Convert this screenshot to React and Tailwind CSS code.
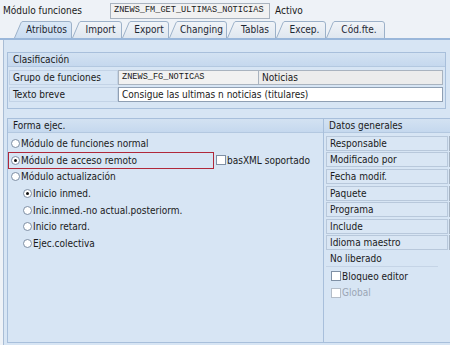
import React from "react";

const tabs = [
  ["Atributos", 58, true],
  ["Import", 50],
  ["Export", 47],
  ["Changing", 58],
  ["Tablas", 49],
  ["Excep.", 50],
  ["Cód.fte.", 59],
];

function Tab({ label, w, active }) {
  const d = `M0.5 17 L7 1.8 Q7.6 0.5 9 0.5 L${w - 3} 0.5 Q${w - 0.5} 0.5 ${w - 0.5} 3 L${w - 0.5} 17`;
  return (
    <div className="relative h-[17px] shrink-0" style={{ width: w }}>
      <svg className="absolute inset-0" width={w} height={17}>
        <defs>
          <linearGradient id={"g" + label} x1="0" y1="0" x2="0" y2="1">
            <stop offset="0" stopColor={active ? "#dce9f7" : "#f1f4f8"} />
            <stop offset="1" stopColor={active ? "#c9dcf1" : "#dfe7f0"} />
          </linearGradient>
        </defs>
        <path d={d} fill={`url(#g${label})`} stroke="#9cb1c9" strokeWidth="1" />
      </svg>
      <span className="relative flex h-full items-center justify-center pl-[7px] text-[10px] text-[#1d2733]">
        {label}
      </span>
    </div>
  );
}

function Radio({ on }) {
  return (
    <span className="flex h-[9px] w-[9px] shrink-0 items-center justify-center rounded-full border border-[#7d8ea4] bg-white">
      {on && <span className="h-[3px] w-[3px] rounded-full bg-[#111]" />}
    </span>
  );
}

function Check({ disabled }) {
  return (
    <span
      className={
        "h-[10px] w-[10px] shrink-0 border bg-white " +
        (disabled ? "border-[#b4bdc8] bg-[#eef1f4]" : "border-[#7f90a5]")
      }
    />
  );
}

function RadioRow({ on, label, indent }) {
  return (
    <div className={"flex h-[16.6px] items-center gap-[1px] " + (indent ? "pl-[15px]" : "pl-[3px]")}>
      <Radio on={on} />
      <span>{label}</span>
    </div>
  );
}

function InfoRow({ label }) {
  return (
    <div className="flex h-[16.6px] items-center pl-[2px]">
      <div className="flex h-[15px] w-[122px] shrink-0 items-center border border-[#b8c8db] bg-[#d9e6f4] pl-[3px]">
        {label}
      </div>
      <div className="ml-[1px] h-[15px] w-[20px] shrink-0 border border-[#a4b1c0] bg-[#f2f2f2]" />
    </div>
  );
}

export default function App() {
  return (
    <div className="flex h-[345px] w-[450px] flex-col overflow-hidden bg-[#eef2f7] font-['DejaVu_Sans_Condensed','Liberation_Sans',sans-serif] text-[10px] text-[#1a1a1a]">
      <div className="flex h-[21px] shrink-0 items-center pl-[3px]">
        <span className="w-[107px] shrink-0">Módulo funciones</span>
        <div className="flex h-[16px] w-[160px] shrink-0 items-center border border-[#a9b3bf] bg-[#f1f1f1] pl-[3px] font-['Liberation_Mono',monospace] text-[8.6px]">
          ZNEWS_FM_GET_ULTIMAS_NOTICIAS
        </div>
        <span className="ml-[5px]">Activo</span>
      </div>

      <div className="flex h-[17px] shrink-0 items-end pl-[14px]">
        {tabs.map(([l, w, a]) => (
          <Tab key={l} label={l} w={w} active={a} />
        ))}
      </div>
      <div className="h-[2px] shrink-0 bg-[#9ab7da]" />

      <div className="ml-[3px] flex flex-1 flex-col border-l border-[#a9bdd5] bg-[#d7e5f4] pl-[3px] pt-[12px]">
        <div className="w-[439px] shrink-0 border border-[#a8bfdb]">
          <div className="flex h-[14px] items-center border-b border-[#b3c8e0] bg-gradient-to-b from-[#d3e2f2] to-[#c5d8ee] pl-[5px]">
            Clasificación
          </div>
          <div className="flex flex-col gap-[2px] px-[1px] pb-[6px] pt-[3px]">
            <div className="flex h-[15px] items-center">
              <div className="flex h-full w-[109px] shrink-0 items-center border border-[#c3d3e6] pl-[3px]">
                Grupo de funciones
              </div>
              <div className="flex h-full w-[141px] shrink-0 items-center border border-[#a9b3bf] bg-[#f1f1f1] pl-[3px] font-['Liberation_Mono',monospace] text-[8.6px]">
                ZNEWS_FG_NOTICAS
              </div>
              <div className="flex h-full w-[184px] shrink-0 items-center border border-l-0 border-[#a9b3bf] bg-[#ececec] pl-[3px]">
                Noticias
              </div>
            </div>
            <div className="flex h-[15px] items-center">
              <div className="flex h-full w-[109px] shrink-0 items-center border border-[#c3d3e6] pl-[3px]">
                Texto breve
              </div>
              <div className="flex h-full w-[325px] shrink-0 items-center border border-[#8f9fb3] bg-white pl-[3px]">
                Consigue las ultimas n noticias (titulares)
              </div>
            </div>
          </div>
        </div>

        <div className="mb-[2px] mt-[9px] flex flex-1 border border-r-0 border-[#a8bfdb]">
          <div className="flex w-[315px] shrink-0 flex-col">
            <div className="flex h-[14px] items-center border-b border-[#b3c8e0] bg-gradient-to-b from-[#d3e2f2] to-[#c5d8ee] pl-[5px]">
              Forma ejec.
            </div>
            <div className="flex flex-col pt-[2px]">
              <RadioRow label="Módulo de funciones normal" />
              <div className="flex items-center">
                <div className="flex h-[17px] w-[206px] shrink-0 items-center gap-[1px] border-[1.5px] border-[#b0283a] pl-[2px]">
                  <Radio on />
                  <span>Módulo de acceso remoto</span>
                </div>
                <div className="ml-[2px] flex items-center gap-[1px]">
                  <Check />
                  <span>basXML soportado</span>
                </div>
              </div>
              <RadioRow label="Módulo actualización" />
              <RadioRow indent on label="Inicio inmed." />
              <RadioRow indent label="Inic.inmed.-no actual.posteriorm." />
              <RadioRow indent label="Inicio retard." />
              <RadioRow indent label="Ejec.colectiva" />
            </div>
          </div>
          <div className="flex flex-1 flex-col border-l border-[#a8bfdb]">
            <div className="flex h-[14px] items-center border-b border-[#b3c8e0] bg-gradient-to-b from-[#d3e2f2] to-[#c5d8ee] pl-[5px]">
              Datos generales
            </div>
            <div className="flex flex-col pt-[2px]">
              <InfoRow label="Responsable" />
              <InfoRow label="Modificado por" />
              <InfoRow label="Fecha modif." />
              <InfoRow label="Paquete" />
              <InfoRow label="Programa" />
              <InfoRow label="Include" />
              <InfoRow label="Idioma maestro" />
              <div className="flex h-[16.6px] items-center pl-[2px]">
                <div className="flex h-[15px] w-[112px] items-center border-b border-[#c5d4e6] pl-[4px]">
                  No liberado
                </div>
              </div>
              <div className="flex h-[16.6px] items-center gap-[1px] pl-[7px]">
                <Check />
                <span>Bloqueo editor</span>
              </div>
              <div className="flex h-[16.6px] items-center gap-[1px] pl-[7px] text-[#9ba6b4]">
                <Check disabled />
                <span>Global</span>
              </div>
            </div>
          </div>
        </div>
      </div>
    </div>
  );
}
